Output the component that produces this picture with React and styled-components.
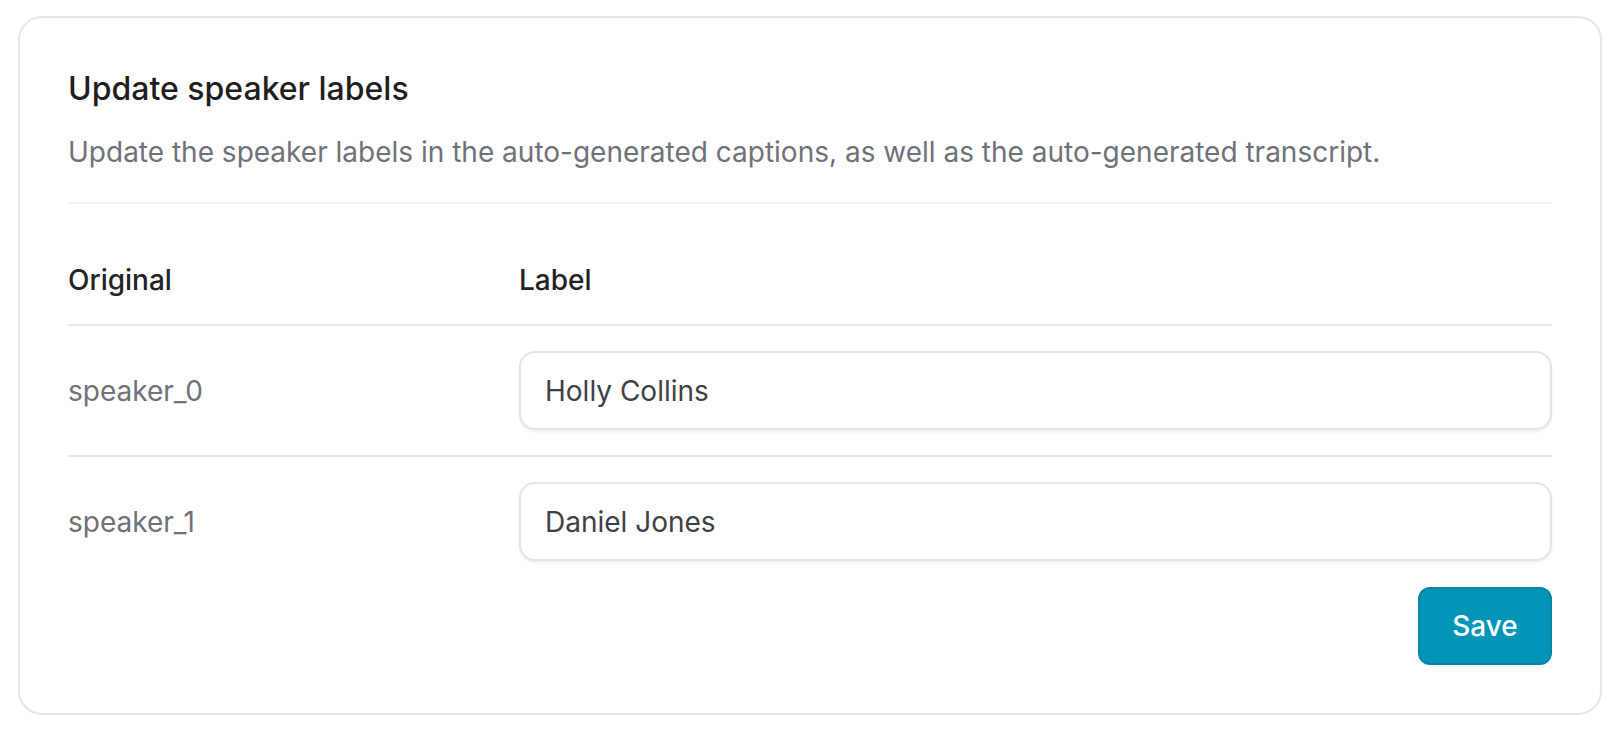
import React from "react";
import styled, { createGlobalStyle } from "styled-components";

const GlobalStyle = createGlobalStyle`
  * { box-sizing: border-box; }
  html, body { margin: 0; padding: 0; background: #ffffff; }
  body { font-family: Inter, "Noto Sans", Arial, sans-serif; -webkit-font-smoothing: antialiased; }
`;

const Page = styled.div`
  padding: 16px 16px 0 18px;
`;

const Card = styled.section`
  border: 2px solid #e6e6e8;
  border-radius: 24px;
  padding: 48px;
  background: #ffffff;
`;

const Title = styled.h2`
  margin: 0;
  font-size: 32px;
  line-height: 46px;
  font-weight: 500;
  color: #1f1f22;
`;

const Description = styled.p`
  margin: 20px 0 0;
  font-size: 28px;
  line-height: 40px;
  font-weight: 400;
  color: #71717a;
`;

const Divider = styled.hr`
  margin: 30px 0 0;
  border: 0;
  height: 2px;
  background: #f3f3f4;
`;

const Table = styled.div`
  margin-top: 32px;
  display: grid;
  grid-template-columns: 451px 1fr;
`;

const HeaderCell = styled.div`
  padding: 24px 0 24px;
  border-bottom: 2px solid #e6e6e8;
  font-size: 28px;
  line-height: 40px;
  font-weight: 500;
  color: #232326;
`;

const Cell = styled.div`
  display: flex;
  align-items: center;
  padding: 25px 0;
  border-bottom: ${(p) => (p.$last ? "none" : "2px solid #e6e6e8")};
`;

const Original = styled.span`
  font-size: 28px;
  line-height: 40px;
  color: #71717a;
`;

const Input = styled.input`
  width: 100%;
  height: 79px;
  padding: 0 24px;
  border: 2px solid #e4e4e7;
  border-radius: 16px;
  box-shadow: 0 2px 3px rgba(0, 0, 0, 0.06);
  background: #ffffff;
  font-family: Inter, "Noto Sans", Arial, sans-serif;
  font-size: 28px;
  color: #3f3f46;
  outline: none;
`;

const Footer = styled.div`
  display: flex;
  justify-content: flex-end;
  margin-top: 1px;
`;

const SaveButton = styled.button`
  width: 134px;
  height: 78px;
  border: 2px solid #0386a6;
  border-radius: 12px;
  background: #0095b6;
  color: #ffffff;
  font-family: Inter, "Noto Sans", Arial, sans-serif;
  font-size: 28px;
  font-weight: 500;
  cursor: pointer;
`;

const speakers = [
  { original: "speaker_0", label: "Holly Collins" },
  { original: "speaker_1", label: "Daniel Jones" },
];

export default function App() {
  return (
    <>
      <GlobalStyle />
      <Page>
        <Card>
          <Title>Update speaker labels</Title>
          <Description>
            Update the speaker labels in the auto-generated captions, as well as the auto-generated transcript.
          </Description>
          <Divider />
          <Table>
            <HeaderCell>Original</HeaderCell>
            <HeaderCell>Label</HeaderCell>
            {speakers.map((s, i) => {
              const last = i === speakers.length - 1;
              return (
                <React.Fragment key={s.original}>
                  <Cell $last={last}>
                    <Original>{s.original}</Original>
                  </Cell>
                  <Cell $last={last}>
                    <Input defaultValue={s.label} />
                  </Cell>
                </React.Fragment>
              );
            })}
          </Table>
          <Footer>
            <SaveButton type="button">Save</SaveButton>
          </Footer>
        </Card>
      </Page>
    </>
  );
}
